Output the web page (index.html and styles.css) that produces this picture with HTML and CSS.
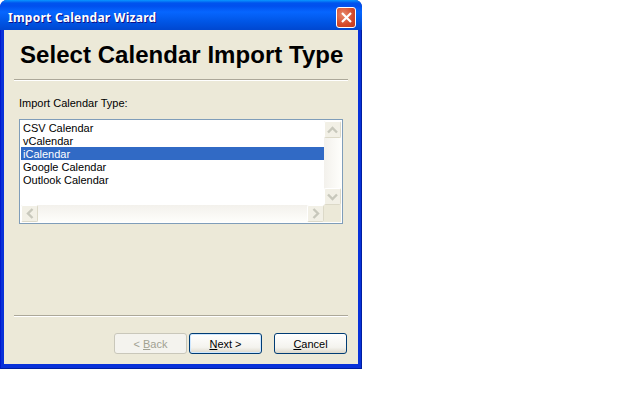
FILE: index.html
```html
<!DOCTYPE html>
<html>
<head>
	<title>Import Calendar Wizard</title>
	<meta charset="utf-8">
	<link rel="stylesheet" href="styles.css">
</head>
<body>
	<div class="window">
		<div class="titlebar">
			<span class="title">Import Calendar Wizard</span>
			<div class="close">
				<svg width="13" height="13" viewBox="0 0 13 13"><path d="M2 2 L11 11 M11 2 L2 11" stroke="#fff" stroke-width="2.2" fill="none"/></svg>
			</div>
		</div>
		<div class="client">
			<h1>Select Calendar Import Type</h1>
			<div class="rule"></div>
			<div class="content">
				<div class="label">Import Calendar Type:</div>
				<div class="listbox">
					<div class="list-main">
						<div class="items">
							<div class="item">CSV Calendar</div>
							<div class="item">vCalendar</div>
							<div class="item selected">iCalendar</div>
							<div class="item">Google Calendar</div>
							<div class="item">Outlook Calendar</div>
						</div>
						<div class="vscroll">
							<div class="sbtn">
								<svg width="11" height="8" viewBox="0 0 11 8"><path d="M1 6.5 L5.5 2 L10 6.5" stroke="#c8c8bc" stroke-width="2.4" fill="none"/></svg>
							</div>
							<div class="sbtn">
								<svg width="11" height="8" viewBox="0 0 11 8"><path d="M1 1.5 L5.5 6 L10 1.5" stroke="#c8c8bc" stroke-width="2.4" fill="none"/></svg>
							</div>
						</div>
					</div>
					<div class="list-bottom">
						<div class="hscroll">
							<div class="sbtn">
								<svg width="8" height="11" viewBox="0 0 8 11"><path d="M6.5 1 L2 5.5 L6.5 10" stroke="#c8c8bc" stroke-width="2.4" fill="none"/></svg>
							</div>
							<div class="sbtn">
								<svg width="8" height="11" viewBox="0 0 8 11"><path d="M1.5 1 L6 5.5 L1.5 10" stroke="#c8c8bc" stroke-width="2.4" fill="none"/></svg>
							</div>
						</div>
						<div class="corner"></div>
					</div>
				</div>
			</div>
			<div class="rule"></div>
			<div class="buttons">
				<div class="btn disabled">&lt; <u>B</u>ack</div>
				<div class="btn default"><u>N</u>ext &gt;</div>
				<div class="btn cancel"><u>C</u>ancel</div>
			</div>
		</div>
	</div>
</body>
</html>
```

FILE: styles.css
```css
*, *:before, *:after { box-sizing:border-box; }

body { margin:0; background-color:#fff; font-family:"Liberation Sans", sans-serif; font-size:11px; color:#000; }

.window {
	width:362px; height:369px; display:flex; flex-direction:column;
	background-color:#0831d9; padding:0 4px 4px 4px; border-radius:7px 7px 0 0;
	border-left:1px solid #0019cf; border-right:1px solid #001ea0; border-bottom:1px solid #001ea0;
}

.titlebar {
	height:30px; margin:0 -5px; padding:4px 5px 0 8px; flex:none;
	display:flex; align-items:center; justify-content:space-between; border-radius:7px 7px 0 0;
	background:linear-gradient(#0997ff 0px, #0053ee 3px, #0050ee 6px, #0666ff 12px, #0055e5 22px, #0047d0 30px);
}
.title { color:#fff; font-family:"Noto Sans", sans-serif; font-weight:bold; font-size:12px; text-shadow:1px 1px 0 #0f1089; letter-spacing:0.25px; }
.close {
	width:20px; height:21px; margin-right:1px; display:flex; align-items:center; justify-content:center;
	border:1px solid #fff; border-radius:3px;
	background:radial-gradient(circle at 35% 35%, #e88a6c, #d4492a 60%, #c03a1a);
}

.client { flex:1; background-color:#ece9d8; margin-left:-1px; margin-right:-1px; padding:0 10px; display:flex; flex-direction:column; }

h1 { margin:0; height:49px; padding:9px 0 0 6px; font-size:24px; font-weight:bold; line-height:32px; letter-spacing:0.04px; white-space:nowrap; }

.rule { height:2px; flex:none; border-top:1px solid #aca899; border-bottom:1px solid #fff; }

.content { flex:1; padding:15px 5px 0 5px; }
.label { height:23px; line-height:14px; }

.listbox { width:324px; height:105px; border:1px solid #7f9db9; background-color:#fff; display:flex; flex-direction:column; padding:1px; }
.list-main { flex:1; display:flex; min-height:0; }
.items { flex:1; }
.item { height:13px; line-height:15px; padding-left:2px; white-space:nowrap; }
.selected { background-color:#316ac5; color:#fff; }

.vscroll { width:17px; display:flex; flex-direction:column; justify-content:space-between; background:linear-gradient(to right, #f3f1ec, #fefefb); }
.list-bottom { height:17px; flex:none; display:flex; }
.hscroll { flex:1; display:flex; justify-content:space-between; background:linear-gradient(#f3f1ec, #fefefb); }
.corner { width:17px; background-color:#ece9d8; }

.sbtn {
	width:17px; height:17px; display:flex; align-items:center; justify-content:center;
	background-color:#f2f0e6; border:1px solid #fff; border-right-color:#dcd9c8; border-bottom-color:#dcd9c8; border-radius:2px;
}

.buttons { height:47px; flex:none; padding:16px 0 0 100px; display:flex; }
.btn {
	width:73px; height:21px; line-height:20px; text-align:center;
	border:1px solid #003c74; border-radius:3px; background:linear-gradient(#fff, #f4f3ee 70%, #dcd8cb);
}
.disabled { border-color:#c9c7ba; background:#f4f3ee; color:#a1a192; margin-right:2px; }
.default { box-shadow:inset 0 0 0 1px #cee7ff; }
.cancel { margin-left:12px; }
```
